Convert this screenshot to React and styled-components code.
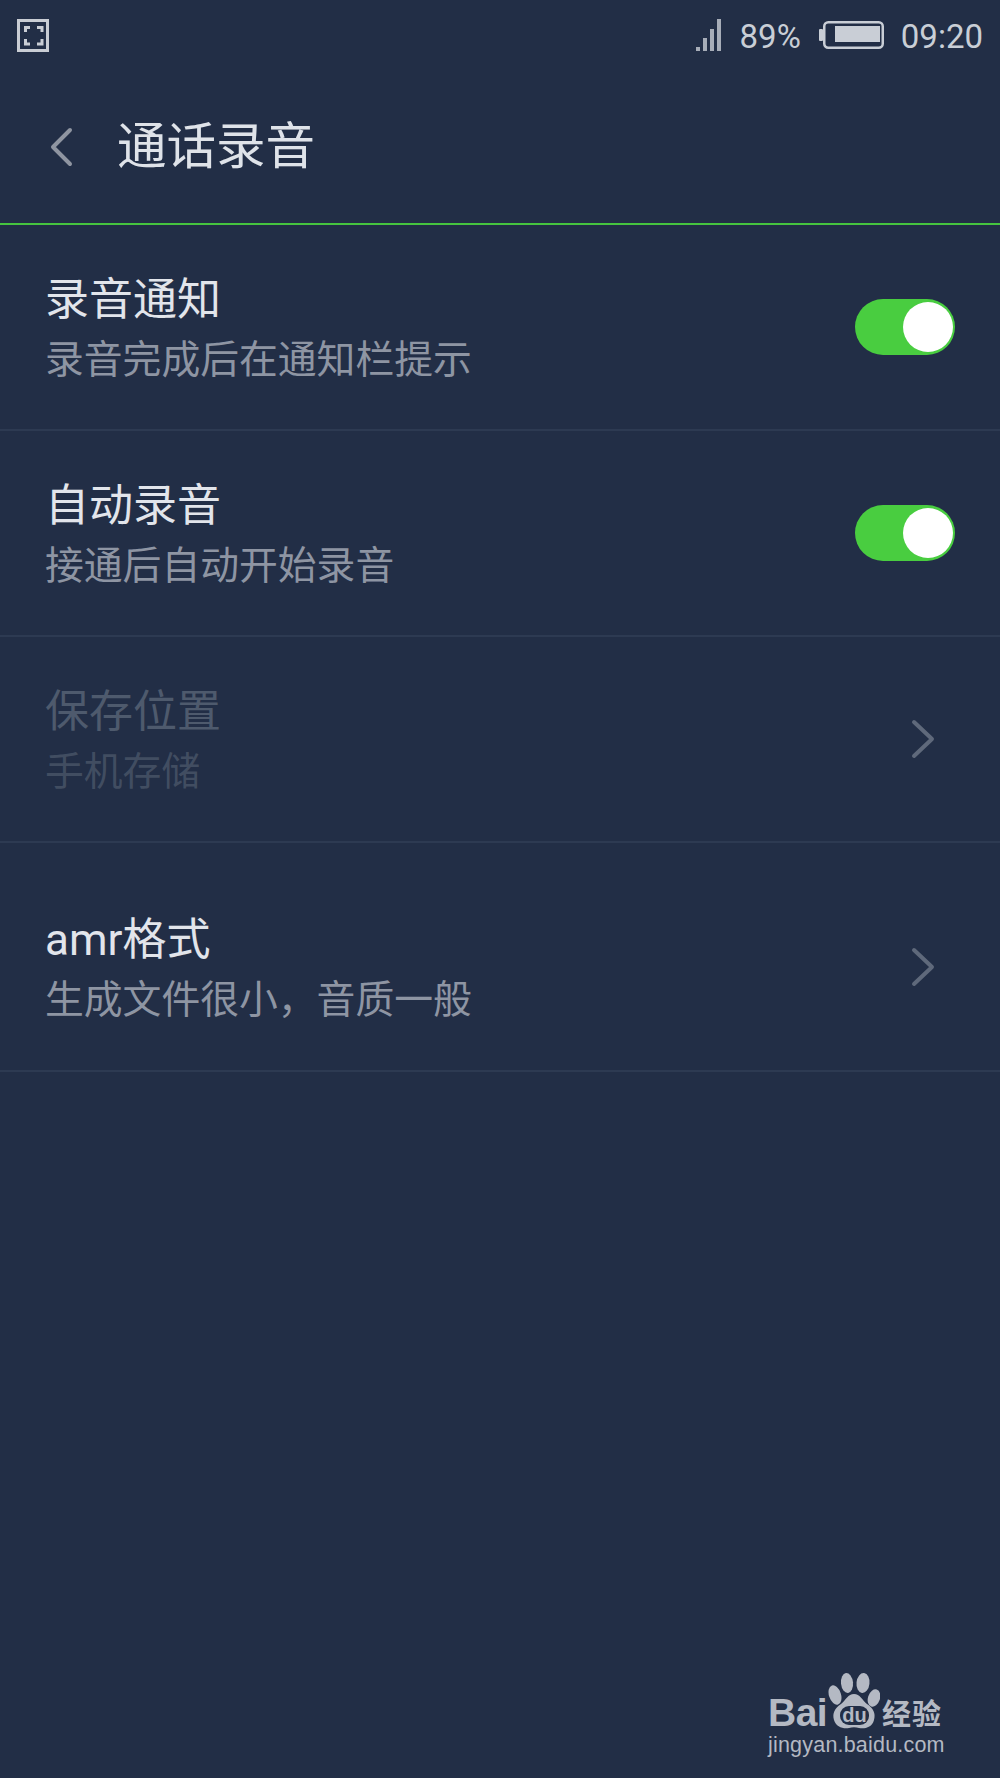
import styled, { createGlobalStyle } from "styled-components";

const GlobalStyle = createGlobalStyle`
  html, body {
    margin: 0;
    padding: 0;
    background: #222e46;
  }
`;

const CJK = `"Noto Sans CJK SC", "Noto Sans", sans-serif`;

const Screen = styled.div`
  position: relative;
  width: 1000px;
  height: 1778px;
  overflow: hidden;
  background: #222e46;
  font-family: Roboto, ${CJK};
`;

const StatusBar = styled.div`
  height: 70px;
  display: flex;
  align-items: center;
  padding: 0 17px;
  color: #c9ced6;
  font-size: 33px;
`;

const StatusRight = styled.div`
  margin-left: auto;
  display: flex;
  align-items: center;
`;

const Percent = styled.span`
  margin: 2px 18px 0 18px;
`;

const Clock = styled.span`
  margin: 2px 0 0 17px;
`;

const Header = styled.header`
  height: 153px;
  display: flex;
  align-items: center;
  padding-left: 50px;
  border-bottom: 2px solid #46c43f;
`;

const PageTitle = styled.h1`
  margin: 3px 0 0 43px;
  font-size: 49.5px;
  font-weight: 400;
  line-height: 1;
  color: #dfe3e9;
`;

const Row = styled.div`
  height: ${(p) => p.$height}px;
  box-sizing: border-box;
  display: flex;
  align-items: center;
  justify-content: space-between;
  padding: ${(p) => p.$pad || 0}px 45px 0 45px;
  border-bottom: 2px solid #2d3a52;
`;

const RowText = styled.div`
  display: flex;
  flex-direction: column;
  gap: 11px;
  margin-top: 3px;
`;

const RowTitle = styled.div`
  font-size: 44px;
  line-height: 52px;
  color: ${(p) => (p.$disabled ? "#4e5a6d" : "#e2e5eb")};
`;

const RowSub = styled.div`
  font-size: 38.8px;
  line-height: 46px;
  color: ${(p) => (p.$disabled ? "#414d61" : "#8e95a3")};
`;

const Toggle = styled.div`
  width: 100px;
  height: 56px;
  border-radius: 28px;
  background: #49cd40;
  display: flex;
  align-items: center;
  justify-content: flex-end;
  padding-right: 2px;
  box-sizing: border-box;
`;

const Knob = styled.div`
  width: 50px;
  height: 50px;
  border-radius: 50%;
  background: #fff;
`;

const Watermark = styled.div`
  position: absolute;
  left: 768px;
  top: 1672px;
  width: 190px;
  color: #b4b9c3;
`;

const LogoLine = styled.div`
  display: flex;
  align-items: flex-end;
  height: 57px;
`;

const LogoBai = styled.span`
  font-family: "Liberation Sans", sans-serif;
  font-weight: 700;
  font-size: 39px;
  line-height: 33px;
  letter-spacing: -0.5px;
  width: 60px;
`;

const LogoCn = styled.span`
  font-family: ${CJK};
  font-weight: 700;
  font-size: 29px;
  line-height: 34px;
  letter-spacing: 1px;
  margin-left: 2px;
`;

const LogoUrl = styled.div`
  font-family: "Liberation Sans", sans-serif;
  font-size: 21.5px;
  line-height: 26px;
  letter-spacing: 0.2px;
  margin-top: 3px;
  white-space: nowrap;
`;

const ScreenshotIcon = () => (
  <svg width="32" height="33" viewBox="0 0 32 33" fill="none" stroke="#c9cdd4">
    <rect x="1.5" y="1.5" width="29" height="30" strokeWidth="3" />
    <path strokeWidth="3" d="M8.5 13V8.5H13M20 8.5h5V13M8.5 20v5H13M25 20v5h-5" />
  </svg>
);

const SignalIcon = () => (
  <svg width="26" height="32" viewBox="0 0 26 32" fill="#a7adb8">
    <rect x="0" y="28" width="4" height="4" />
    <rect x="7" y="19" width="4" height="13" />
    <rect x="14" y="10" width="4" height="22" />
    <rect x="21" y="0" width="4" height="32" />
  </svg>
);

const BatteryIcon = () => (
  <svg width="65" height="28" viewBox="0 0 65 28">
    <rect x="0" y="8" width="4" height="12" rx="1" fill="#c9ced6" />
    <rect x="5.25" y="1.25" width="58.5" height="25.5" rx="4" fill="none" stroke="#c9ced6" strokeWidth="2.5" />
    <rect x="16" y="5" width="45" height="16" fill="#c9ced6" />
  </svg>
);

const BackIcon = () => (
  <svg width="24" height="40" viewBox="0 0 24 40" fill="none" stroke="#8f95a1" strokeWidth="4" strokeLinecap="round" strokeLinejoin="round">
    <path d="M20 3 3 20l17 17" />
  </svg>
);

const ChevronIcon = () => (
  <svg width="24" height="40" viewBox="0 0 24 40" fill="none" stroke="#5f697b" strokeWidth="4" strokeLinecap="round" strokeLinejoin="round" style={{ marginRight: 20 }}>
    <path d="M3 3l18 17L3 37" />
  </svg>
);

const PawIcon = () => (
  <svg width="52" height="57" viewBox="0 0 52 57" fill="#b4b9c3">
    <ellipse cx="7" cy="23" rx="6" ry="10" transform="rotate(-18 7 23)" />
    <ellipse cx="19" cy="11" rx="6" ry="10" transform="rotate(-6 19 11)" />
    <ellipse cx="35" cy="11" rx="6.5" ry="10" transform="rotate(6 35 11)" />
    <ellipse cx="46" cy="26" rx="6" ry="9" transform="rotate(18 46 26)" />
    <path d="M26 22c6 0 8 6 13 10 6 4 9 9 7 16-2 8-10 9-15 8-3-1-7-1-10 0-6 1-13-1-15-8-2-7 1-12 7-16 5-4 7-10 13-10z" />
    <rect x="12" y="34" width="29" height="19" rx="9" fill="#222e46" />
    <text x="26.5" y="50" textAnchor="middle" fontFamily="Liberation Sans, sans-serif" fontWeight="700" fontSize="20" fill="#b4b9c3">du</text>
  </svg>
);

const App = () => {
  return (
    <Screen>
      <GlobalStyle />
      <StatusBar>
        <ScreenshotIcon />
        <StatusRight>
          <SignalIcon />
          <Percent>89%</Percent>
          <BatteryIcon />
          <Clock>09:20</Clock>
        </StatusRight>
      </StatusBar>
      <Header>
        <BackIcon />
        <PageTitle>通话录音</PageTitle>
      </Header>
      <Row $height={206}>
        <RowText>
          <RowTitle>录音通知</RowTitle>
          <RowSub>录音完成后在通知栏提示</RowSub>
        </RowText>
        <Toggle>
          <Knob />
        </Toggle>
      </Row>
      <Row $height={206}>
        <RowText>
          <RowTitle>自动录音</RowTitle>
          <RowSub>接通后自动开始录音</RowSub>
        </RowText>
        <Toggle>
          <Knob />
        </Toggle>
      </Row>
      <Row $height={206}>
        <RowText>
          <RowTitle $disabled>保存位置</RowTitle>
          <RowSub $disabled>手机存储</RowSub>
        </RowText>
        <ChevronIcon />
      </Row>
      <Row $height={229} $pad={21}>
        <RowText>
          <RowTitle>amr格式</RowTitle>
          <RowSub>生成文件很小，音质一般</RowSub>
        </RowText>
        <ChevronIcon />
      </Row>
      <Watermark>
        <LogoLine>
          <LogoBai>Bai</LogoBai>
          <PawIcon />
          <LogoCn>经验</LogoCn>
        </LogoLine>
        <LogoUrl>jingyan.baidu.com</LogoUrl>
      </Watermark>
    </Screen>
  );
};

export default App;
